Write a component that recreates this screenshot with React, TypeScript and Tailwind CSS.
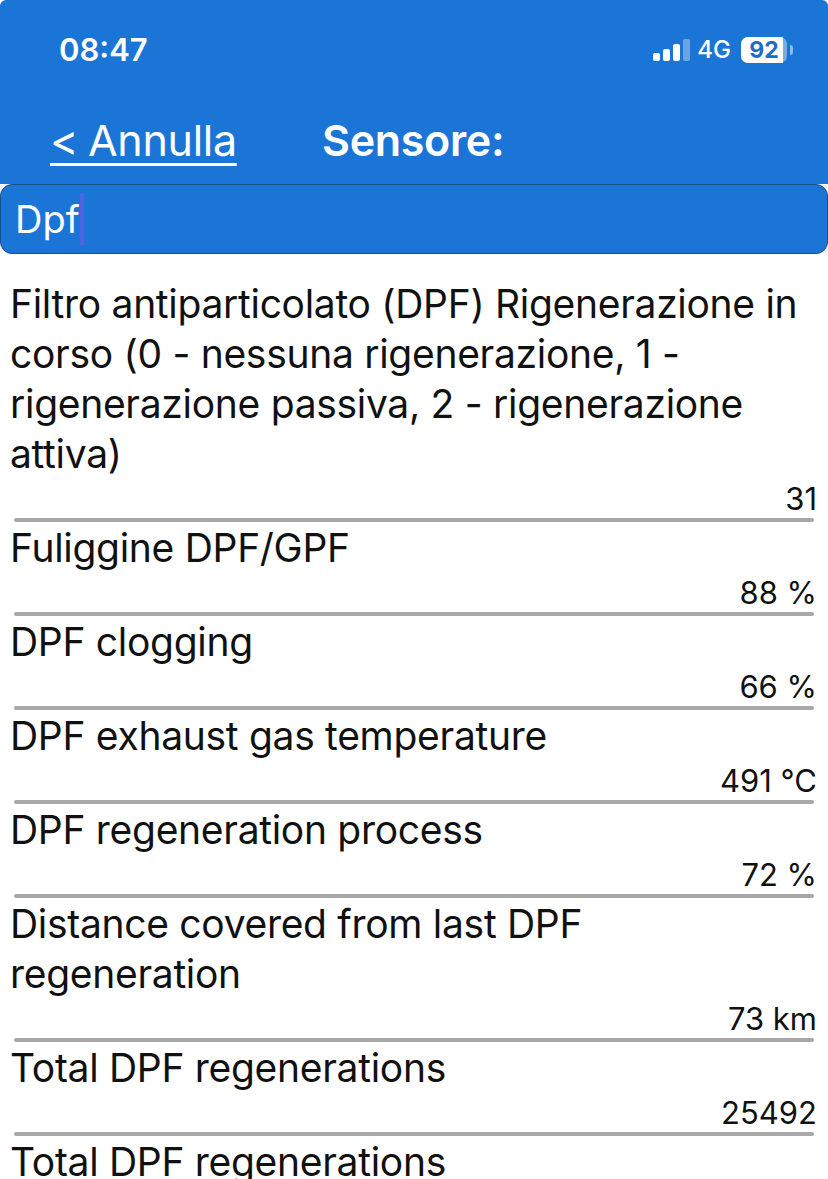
import React from 'react';

const sensors = [
  {
    name: 'Filtro antiparticolato (DPF) Rigenerazione in corso (0 - nessuna rigenerazione, 1 - rigenerazione passiva, 2 - rigenerazione attiva)',
    value: '31',
  },
  { name: 'Fuliggine DPF/GPF', value: '88 %' },
  { name: 'DPF clogging', value: '66 %' },
  { name: 'DPF exhaust gas temperature', value: '491 °C' },
  { name: 'DPF regeneration process', value: '72 %' },
  { name: 'Distance covered from last DPF regeneration', value: '73 km' },
  { name: 'Total DPF regenerations', value: '25492' },
  { name: 'Total DPF regenerations', value: '' },
];

const SignalBars = () => (
  <svg width="38" height="24" viewBox="0 0 38 24" className="block">
    <rect x="1" y="15" width="7" height="8" rx="2" fill="#fff" />
    <rect x="11" y="11" width="7" height="12" rx="2" fill="#fff" />
    <rect x="21" y="6" width="7" height="17" rx="2" fill="#fff" />
    <rect x="31" y="1" width="7" height="22" rx="2" fill="#fff" fillOpacity="0.35" />
  </svg>
);

const Battery = () => (
  <div className="flex items-center gap-[3px]">
    <div className="relative h-[26px] w-[46px] rounded-[7px] bg-white/40">
      <div className="h-full w-[42px] rounded-l-[7px] bg-white" />
      <span className="absolute inset-0 flex items-center justify-center text-[23px] leading-[26px] font-bold text-[#1f6cc8]">
        92
      </span>
    </div>
    <div className="h-[10px] w-[3px] rounded-r-full bg-white/50" />
  </div>
);

export default function App() {
  return (
    <div className="h-[1179px] w-[828px] overflow-hidden bg-white font-['Inter',sans-serif] text-[#111]">
      <div className="h-[184px] rounded-t-[6px] bg-[#1a75d6] text-white">
        <div className="flex h-[114px] items-start justify-between pt-[31px] pr-[35px] pl-[59px]">
          <span className="text-[31px] leading-[38px] font-semibold">08:47</span>
          <div className="flex h-[38px] items-center">
            <SignalBars />
            <span className="mr-[10px] ml-[7px] text-[24px] font-medium">4G</span>
            <Battery />
          </div>
        </div>
        <div className="flex items-center pl-[50px]">
          <span className="w-[272px] text-[43px] leading-[52px] tracking-[-0.3px] underline decoration-[3px] underline-offset-[7px] [word-spacing:-2px]">
            {'< Annulla'}
          </span>
          <span className="text-[43px] leading-[52px] font-semibold tracking-[-0.3px]">Sensore:</span>
        </div>
      </div>

      <div className="flex h-[70px] items-center rounded-[12px] border border-[#17528f] bg-[#1a75d6] pl-[14px] text-white">
        <span className="text-[38px] leading-[50px]">Dpf</span>
        <span className="h-[52px] w-[4px] bg-[#4f62e0]" />
      </div>

      <ul className="pt-[25px]">
        {sensors.map((sensor, i) => (
          <li key={i}>
            <div className="px-[10px] text-[39px] leading-[50px] tracking-[-0.3px]">{sensor.name}</div>
            <div className="h-[39px] pr-[11px] text-right text-[31px] leading-[40px]">{sensor.value}</div>
            <div className="mx-[14px] mb-[1px] h-[4px] rounded-full bg-[#a8a8a8]" />
          </li>
        ))}
      </ul>
    </div>
  );
}
